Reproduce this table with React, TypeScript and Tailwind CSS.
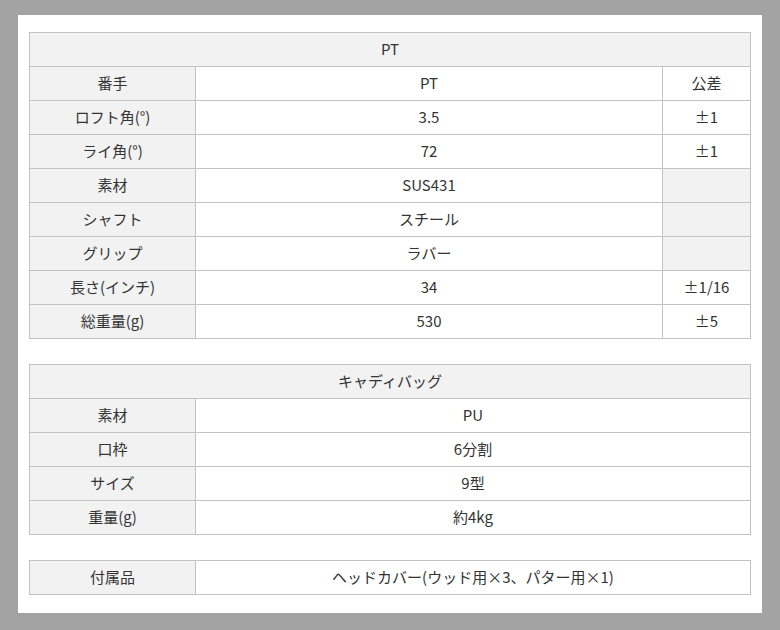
const font = { fontFamily: '"Noto Sans CJK JP", "Noto Sans", sans-serif' };

type Row = { label: string; value: string; tol?: string };

const clubRows: Row[] = [
  { label: '番手', value: 'PT', tol: '公差' },
  { label: 'ロフト角(°)', value: '3.5', tol: '±1' },
  { label: 'ライ角(°)', value: '72', tol: '±1' },
  { label: '素材', value: 'SUS431', tol: '' },
  { label: 'シャフト', value: 'スチール', tol: '' },
  { label: 'グリップ', value: 'ラバー', tol: '' },
  { label: '長さ(インチ)', value: '34', tol: '±1/16' },
  { label: '総重量(g)', value: '530', tol: '±5' },
];

const bagRows: Row[] = [
  { label: '素材', value: 'PU' },
  { label: '口枠', value: '6分割' },
  { label: 'サイズ', value: '9型' },
  { label: '重量(g)', value: '約4kg' },
];

const cell = 'border border-[#c3c3c3] h-[34px] p-0 text-center align-middle';

function SpecTable({ title, rows, withTol }: { title?: string; rows: Row[]; withTol?: boolean }) {
  return (
    <table className="w-[722px] border-collapse table-fixed text-[15px] text-[#333]">
      <colgroup>
        <col className="w-[166px]" />
        <col />
        {withTol && <col className="w-[88px]" />}
      </colgroup>
      <tbody>
        {title && (
          <tr>
            <td colSpan={withTol ? 3 : 2} className={`${cell} bg-[#f2f2f2]`}>
              {title}
            </td>
          </tr>
        )}
        {rows.map((r) => (
          <tr key={r.label}>
            <td className={`${cell} bg-[#f2f2f2]`}>{r.label}</td>
            <td className={`${cell} bg-white`}>{r.value}</td>
            {withTol && (
              <td className={`${cell} ${r.tol ? 'bg-white' : 'bg-[#f2f2f2]'}`}>{r.tol}</td>
            )}
          </tr>
        ))}
      </tbody>
    </table>
  );
}

export default function App() {
  return (
    <div className="w-[780px] h-[630px] bg-[#a3a3a3] pt-[15px] pl-[18px]" style={font}>
      <div className="w-[744px] h-[598px] bg-white pt-[17px] pl-[11px] flex flex-col">
        <SpecTable title="PT" rows={clubRows} withTol />
        <div className="h-[25px]" />
        <SpecTable title="キャディバッグ" rows={bagRows} />
        <div className="h-[25px]" />
        <SpecTable rows={[{ label: '付属品', value: 'ヘッドカバー(ウッド用×3、パター用×1)' }]} />
      </div>
    </div>
  );
}
